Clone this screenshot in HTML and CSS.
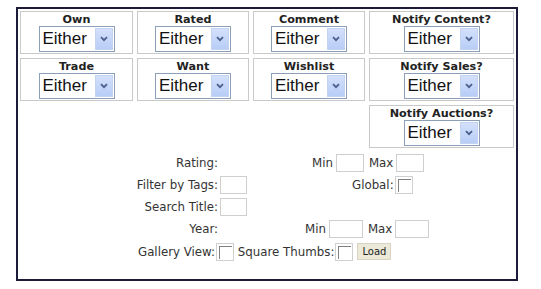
FILE: index.html
```html
<!DOCTYPE html>
<html lang="en">
<head>
    <meta charset="UTF-8">
    <title>Filters</title>
    <link rel="stylesheet" href="styles.css">
</head>
<body>
<div class="panel">
    <div class="filters">
        <div class="cell"><div class="cap">Own</div><div class="pick"><span>Either</span><i class="arrow"><svg width="8" height="6" viewBox="0 0 8 6"><path d="M1 1.2 L4 4.2 L7 1.2" fill="none" stroke="#4a5f8c" stroke-width="1.8"/></svg></i></div></div>
        <div class="cell"><div class="cap">Rated</div><div class="pick"><span>Either</span><i class="arrow"><svg width="8" height="6" viewBox="0 0 8 6"><path d="M1 1.2 L4 4.2 L7 1.2" fill="none" stroke="#4a5f8c" stroke-width="1.8"/></svg></i></div></div>
        <div class="cell"><div class="cap">Comment</div><div class="pick"><span>Either</span><i class="arrow"><svg width="8" height="6" viewBox="0 0 8 6"><path d="M1 1.2 L4 4.2 L7 1.2" fill="none" stroke="#4a5f8c" stroke-width="1.8"/></svg></i></div></div>
        <div class="cell"><div class="cap">Notify Content?</div><div class="pick"><span>Either</span><i class="arrow"><svg width="8" height="6" viewBox="0 0 8 6"><path d="M1 1.2 L4 4.2 L7 1.2" fill="none" stroke="#4a5f8c" stroke-width="1.8"/></svg></i></div></div>

        <div class="cell"><div class="cap">Trade</div><div class="pick"><span>Either</span><i class="arrow"><svg width="8" height="6" viewBox="0 0 8 6"><path d="M1 1.2 L4 4.2 L7 1.2" fill="none" stroke="#4a5f8c" stroke-width="1.8"/></svg></i></div></div>
        <div class="cell"><div class="cap">Want</div><div class="pick"><span>Either</span><i class="arrow"><svg width="8" height="6" viewBox="0 0 8 6"><path d="M1 1.2 L4 4.2 L7 1.2" fill="none" stroke="#4a5f8c" stroke-width="1.8"/></svg></i></div></div>
        <div class="cell"><div class="cap">Wishlist</div><div class="pick"><span>Either</span><i class="arrow"><svg width="8" height="6" viewBox="0 0 8 6"><path d="M1 1.2 L4 4.2 L7 1.2" fill="none" stroke="#4a5f8c" stroke-width="1.8"/></svg></i></div></div>
        <div class="cell"><div class="cap">Notify Sales?</div><div class="pick"><span>Either</span><i class="arrow"><svg width="8" height="6" viewBox="0 0 8 6"><path d="M1 1.2 L4 4.2 L7 1.2" fill="none" stroke="#4a5f8c" stroke-width="1.8"/></svg></i></div></div>

        <div class="cell last"><div class="cap">Notify Auctions?</div><div class="pick"><span>Either</span><i class="arrow"><svg width="8" height="6" viewBox="0 0 8 6"><path d="M1 1.2 L4 4.2 L7 1.2" fill="none" stroke="#4a5f8c" stroke-width="1.8"/></svg></i></div></div>
    </div>

    <div class="extra">
        <div class="line">
            <span class="lab">Rating:</span><span class="slot"></span>
            <span class="grp g-rating">Min<input type="text" class="fld w28"><span class="mx">Max</span><input type="text" class="fld w28"></span>
        </div>
        <div class="line">
            <span class="lab">Filter by Tags:</span><span class="slot"><input type="text" class="fld w27"></span>
            <span class="grp g-global">Global:<span class="chk"></span></span>
        </div>
        <div class="line">
            <span class="lab">Search Title:</span><span class="slot"><input type="text" class="fld w27"></span>
        </div>
        <div class="line">
            <span class="lab">Year:</span><span class="slot"></span>
            <span class="grp g-year">Min<input type="text" class="fld w34"><span class="mx">Max</span><input type="text" class="fld w34"></span>
        </div>
        <div class="line bottom">
            Gallery View:<span class="chk"></span>&nbsp;Square Thumbs:<span class="chk"></span><button class="load">Load</button>
        </div>
    </div>
</div>
</body>
</html>
```

FILE: styles.css
```css
body{
    margin: 0;
    padding: 7px 0 0 16px;
    background: #fff;
    font-family: "DejaVu Sans", Verdana, sans-serif;
    font-size: 11.8px;
    color: #333;
}
.panel{
    width: 498px;
    height: 270px;
    border: 2px solid #1c1b3a;
    background: #fff;
}
.filters{
    display: grid;
    grid-template-columns: 113px 112px 112px 145px;
    grid-auto-rows: 43px;
    gap: 4px;
    padding: 2px 0 0 2px;
}
.cell{
    box-sizing: border-box;
    border: 1px solid #c9c9c9;
    padding-top: 1px;
    text-align: center;
}
.last{
    grid-column: 4;
}
.cap{
    font-size: 11.2px;
    font-weight: bold;
    color: #222;
    height: 13px;
    line-height: 13px;
}
.pick{
    box-sizing: border-box;
    display: inline-flex;
    align-items: center;
    justify-content: space-between;
    width: 76px;
    height: 26px;
    border: 1px solid #8c9fb8;
    padding: 0 1px 0 3px;
    font-family: "Liberation Sans", Arial, sans-serif;
    font-size: 17px;
    color: #111;
    text-align: left;
}
.arrow{
    display: flex;
    align-items: center;
    justify-content: center;
    width: 18px;
    height: 22px;
    background: linear-gradient(#d3e0fb, #b8cdf6);
    border: 1px solid #c4d3f2;
    box-sizing: border-box;
}
.extra{
    margin-top: 4px;
}
.line{
    display: flex;
    align-items: center;
    height: 22px;
}
.lab{
    width: 200px;
    text-align: right;
}
.slot{
    width: 30px;
    margin-left: 2px;
    display: flex;
}
.grp{
    display: flex;
    align-items: center;
}
.grp .fld{
    margin-left: 3px;
}
.mx{
    margin-left: 5px;
}
.g-rating{
    margin-left: 62px;
}
.g-global{
    margin-left: 102px;
}
.g-year{
    margin-left: 55px;
}
.fld{
    box-sizing: border-box;
    height: 18px;
    padding: 0;
    margin: 0;
    border: 1px solid #cfcfcf;
    background: #fff;
}
.w27{ width: 27px; }
.w28{ width: 28px; }
.w34{ width: 34px; }
.chk{
    box-sizing: border-box;
    display: inline-block;
    width: 18px;
    height: 18px;
    border: 1px solid #d0d0d0;
    margin-left: 1px;
    position: relative;
}
.chk::after{
    content: "";
    position: absolute;
    left: 2px;
    top: 2px;
    width: 12px;
    height: 12px;
    border-top: 1px solid #808080;
    border-left: 1px solid #808080;
}
.bottom{
    margin-left: 120px;
    height: 23px;
}
.load{
    margin-left: 4px;
    height: 17px;
    width: 34px;
    padding: 0;
    border: 1px solid #d8d4c4;
    background: #ece9d8;
    font-family: "DejaVu Sans", Verdana, sans-serif;
    font-size: 10px;
    color: #222;
}
```
